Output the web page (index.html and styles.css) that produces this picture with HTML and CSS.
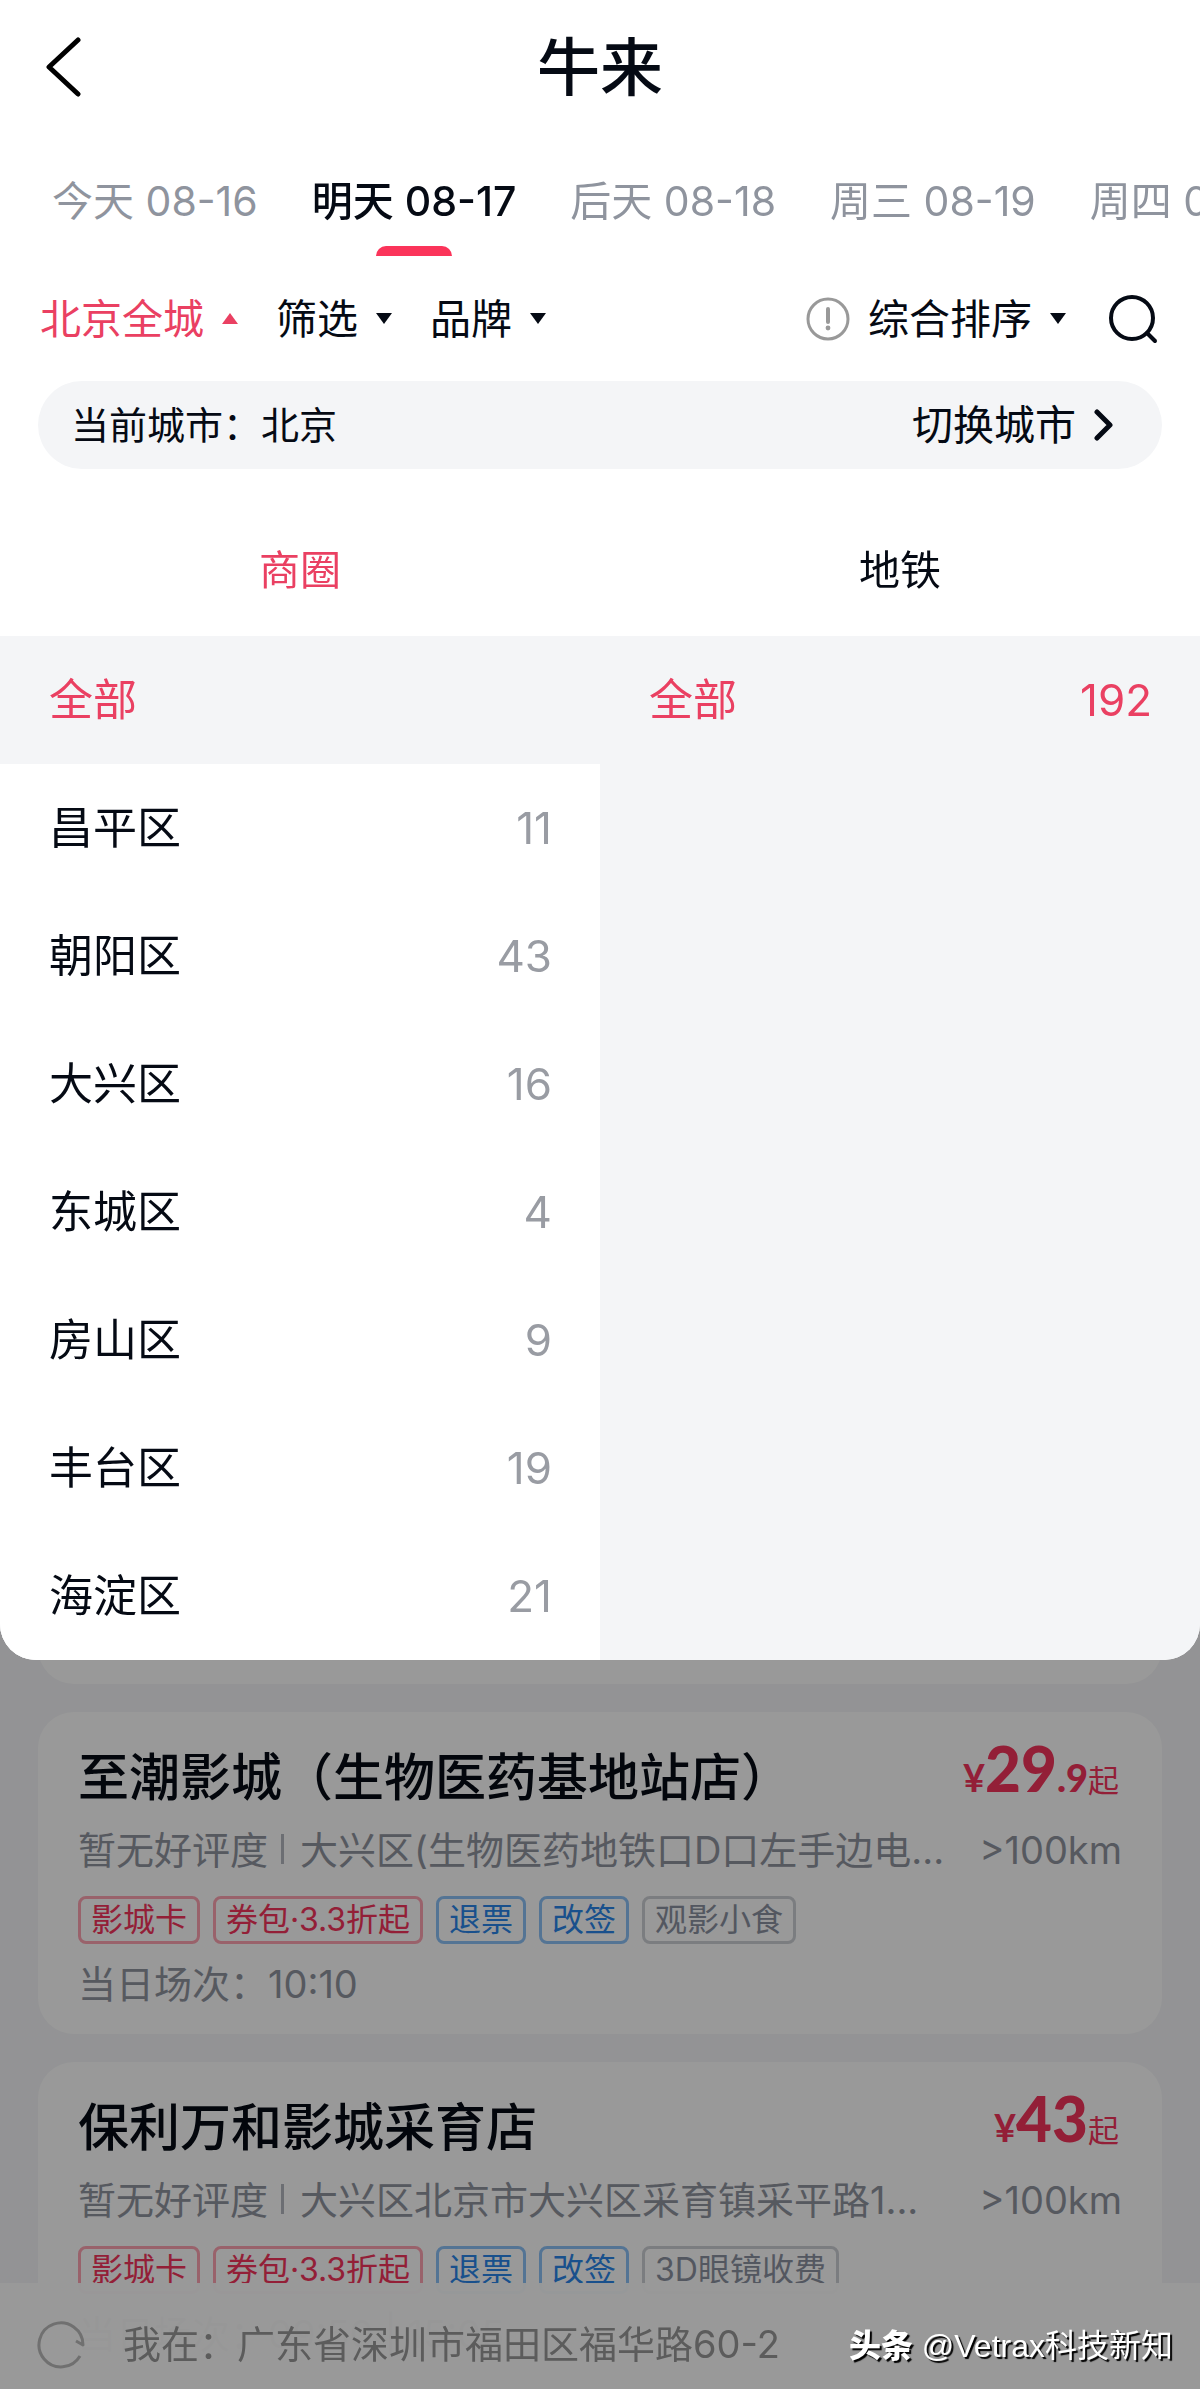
FILE: index.html
```html
<!DOCTYPE html>
<html lang="zh-CN">
<head>
    <meta charset="UTF-8">
    <meta name="viewport" content="width=device-width, initial-scale=1.0">
    <title>牛来</title>
    <link rel="stylesheet" href="styles.css">
</head>
<body>

    <!-- 顶部：标题、日期、筛选、区域面板 -->
    <div class="top">
        <header class="header">
            <button class="back" aria-label="返回">
                <svg width="36" height="60" viewBox="0 0 36 60"><path d="M33 3 L4 30 L33 57" fill="none" stroke="#000" stroke-width="5" stroke-linecap="round" stroke-linejoin="round"/></svg>
            </button>
            <h1>牛来</h1>
        </header>

        <nav class="dates">
            <a href="#">今天 08-16</a>
            <a href="#" class="active">明天 08-17</a>
            <a href="#">后天 08-18</a>
            <a href="#">周三 08-19</a>
            <a href="#">周四 08-20</a>
        </nav>

        <div class="filters">
            <button class="filter open">北京全城<span class="arrow"></span></button>
            <button class="filter">筛选<span class="arrow"></span></button>
            <button class="filter">品牌<span class="arrow"></span></button>
            <button class="filter sort">
                <svg width="44" height="44" viewBox="0 0 44 44"><circle cx="22" cy="22" r="20" fill="none" stroke="#999" stroke-width="3"/><path d="M22 12 V25" stroke="#999" stroke-width="4" stroke-linecap="round"/><circle cx="22" cy="31" r="2.4" fill="#999"/></svg>
                综合排序<span class="arrow"></span>
            </button>
            <button class="search" aria-label="搜索">
                <svg width="50" height="50" viewBox="0 0 50 50"><circle cx="24" cy="24" r="21" fill="none" stroke="#050a14" stroke-width="4"/><path d="M39 39 L47 47" stroke="#050a14" stroke-width="4" stroke-linecap="round"/></svg>
            </button>
        </div>

        <div class="city">
            <span>当前城市：北京</span>
            <a href="#">切换城市
                <svg width="20" height="32" viewBox="0 0 20 32"><path d="M3 3 L16 16 L3 29" fill="none" stroke="#050a14" stroke-width="5" stroke-linecap="round" stroke-linejoin="round"/></svg>
            </a>
        </div>

        <div class="kinds">
            <button class="active">商圈</button>
            <button>地铁</button>
        </div>

        <div class="areas">
            <ul class="districts">
                <li class="active"><a href="#">全部</a></li>
                <li><a href="#">昌平区<span>11</span></a></li>
                <li><a href="#">朝阳区<span>43</span></a></li>
                <li><a href="#">大兴区<span>16</span></a></li>
                <li><a href="#">东城区<span>4</span></a></li>
                <li><a href="#">房山区<span>9</span></a></li>
                <li><a href="#">丰台区<span>19</span></a></li>
                <li><a href="#">海淀区<span>21</span></a></li>
            </ul>
            <ul class="streets">
                <li class="active"><a href="#">全部<span>192</span></a></li>
            </ul>
        </div>
    </div>

    <!-- 影院列表 -->
    <main class="cinemas">
        <div class="card card-end"></div>

        <article class="card">
            <div class="row">
                <h2>至潮影城（生物医药基地站店）</h2>
                <p class="price">¥<b>29</b><strong>.9</strong><span>起</span></p>
            </div>
            <div class="row meta">
                <p><span class="score">暂无好评度</span>大兴区(生物医药地铁口D口左手边电...</p>
                <span>&gt;100km</span>
            </div>
            <div class="tags">
                <span class="tag red">影城卡</span>
                <span class="tag red">券包·3.3折起</span>
                <span class="tag blue">退票</span>
                <span class="tag blue">改签</span>
                <span class="tag">观影小食</span>
            </div>
            <p class="session">当日场次：10:10</p>
        </article>

        <article class="card">
            <div class="row">
                <h2>保利万和影城采育店</h2>
                <p class="price">¥<b>43</b><span>起</span></p>
            </div>
            <div class="row meta">
                <p><span class="score">暂无好评度</span>大兴区北京市大兴区采育镇采平路1...</p>
                <span>&gt;100km</span>
            </div>
            <div class="tags">
                <span class="tag red">影城卡</span>
                <span class="tag red">券包·3.3折起</span>
                <span class="tag blue">退票</span>
                <span class="tag blue">改签</span>
                <span class="tag">3D眼镜收费</span>
            </div>
            <p class="session">当日场次：09:50 | 15:05</p>
        </article>
    </main>

    <!-- 底部定位 -->
    <footer class="location">
        <svg width="50" height="50" viewBox="0 0 50 50"><path d="M44 37 A22 22 0 1 1 47 26 L40 22" fill="none" stroke="#bbb" stroke-width="3" stroke-linejoin="round"/></svg>
        <span>我在：广东省深圳市福田区福华路60-2</span>
    </footer>

    <div class="mask"></div>
    <div class="mark"><b>头条</b> @Vetrax科技新知</div>

</body>
</html>
```
FILE: styles.css
```css
*
{
    box-sizing: border-box; margin: 0; padding: 0;
}

body
{
    background-color: #f5f6f8; color: #050a14;
    font-family: Inter, "Noto Sans CJK SC", sans-serif;
    font-size: 38px; line-height: 56px;
    overflow-x: hidden;
}

a { color: inherit; text-decoration: none; }

button
{
    border: none; background: none; color: inherit;
    font: inherit; cursor: pointer;
}

svg { display: block; flex: none; }

ul { list-style: none; }

/* 顶部 */
.top
{
    position: relative; z-index: 3; overflow: hidden;
    background-color: #fff; border-radius: 0 0 36px 36px;
}

.header
{
    display: grid; grid-template-columns: 1fr auto 1fr;
    align-items: center; height: 134px; padding: 0 45px;
}

.header h1 { font-size: 63px; font-weight: 500; line-height: 80px; }

.back { justify-self: start; }

/* 日期 */
.dates
{
    display: flex; gap: 54px; height: 122px; padding: 39px 0 0 52px;
    overflow: hidden; white-space: nowrap;
    font-size: 41px; color: #8f949e;
}

.dates a { flex: none; position: relative; }

.dates .active { color: #050a14; font-weight: 500; }

.dates .active::after
{
    content: ""; position: absolute; bottom: 0; left: 50%;
    width: 76px; height: 10px; margin-left: -38px;
    background-color: #fb345a; border-radius: 10px 10px 0 0;
}

/* 筛选 */
.filters
{
    display: flex; align-items: center; gap: 38px;
    height: 125px; padding: 0 42px 0 40px; font-size: 41px;
}

.filter { display: flex; align-items: center; gap: 18px; }

.sort { margin: 0 4px 0 auto; }

.open, .active { color: #ea4062; }

.arrow
{
    border: 8px solid transparent; border-top: 11px solid currentColor;
    border-bottom: none;
}

.open .arrow
{
    border-top: none; border-bottom: 11px solid currentColor;
}

/* 当前城市 */
.city
{
    display: flex; align-items: center; justify-content: space-between;
    height: 88px; margin: 0 38px; padding: 0 48px 0 33px;
    background-color: #f4f5f7; border-radius: 44px;
}

.city a { display: flex; align-items: center; gap: 18px; font-size: 41px; }

.kinds { display: flex; height: 167px; padding-top: 34px; }

.kinds button { flex: 1; font-size: 41px; }

/* 区域 */
.areas { display: flex; background-color: #f4f5f7; font-size: 44px; }

.districts, .streets { flex: 1; }

.districts { background-color: #fff; }

.areas a
{
    display: flex; align-items: center; justify-content: space-between;
    height: 128px; padding: 0 48px 0 49px;
}

.areas span { color: #999ca3; }

.areas .active { background-color: #f4f5f7; }

.areas .active span { color: inherit; }

/* 影院卡片 */
.cinemas
{
    display: flex; flex-direction: column; gap: 28px;
    margin-top: -36px; padding: 0 38px;
}

.card
{
    padding: 38px 40px 22px; background-color: #fff; border-radius: 36px;
}

.card-end { height: 59px; border-radius: 0 0 36px 36px; }

.row
{
    display: flex; align-items: center; justify-content: space-between;
    height: 56px;
}

.row h2 { font-size: 51px; font-weight: 500; }

.price
{
    padding: 0 3px 8px 0; color: #f5355c;
    font-family: Lato, "Noto Sans CJK SC", sans-serif;
    font-size: 38px; font-weight: bold;
}

.price b { font-size: 62px; }

.price span { font-size: 31px; font-weight: normal; }

.meta { margin-top: 16px; color: #90949f; }

.score::after
{
    content: ""; display: inline-block; width: 3px; height: 30px;
    margin: 0 16px 0 13px; background-color: #b4b8c0;
}

.tags { display: flex; gap: 13px; margin-top: 18px; }

.tag
{
    padding: 0 10px; border: 3px solid #cdd0d6; border-radius: 8px;
    color: #8b91a1; font-size: 32px; line-height: 42px;
}

.red { border-color: #ffa3b2; color: #f5355c; }

.blue { border-color: #8dc2f7; color: #2a86ea; }

.session { margin-top: 12px; color: #90949f; }

/* 底部 */
.location
{
    position: fixed; right: 0; bottom: 0; left: 0; z-index: 1;
    display: flex; align-items: center; gap: 37px;
    height: 106px; padding: 16px 36px 0;
    background-color: rgba(255, 255, 255, 0.97); color: #999;
}

.mask
{
    position: fixed; inset: 0; z-index: 2;
    background-color: rgba(0, 0, 0, 0.4);
}

.mark
{
    position: fixed; right: 27px; bottom: 15px; z-index: 4;
    color: #fff; font-family: "Liberation Sans", "Noto Sans CJK SC", sans-serif;
    font-size: 32px; text-shadow: 2px 2px 1px #000;
}

.mark b { font-weight: 900; }
```
